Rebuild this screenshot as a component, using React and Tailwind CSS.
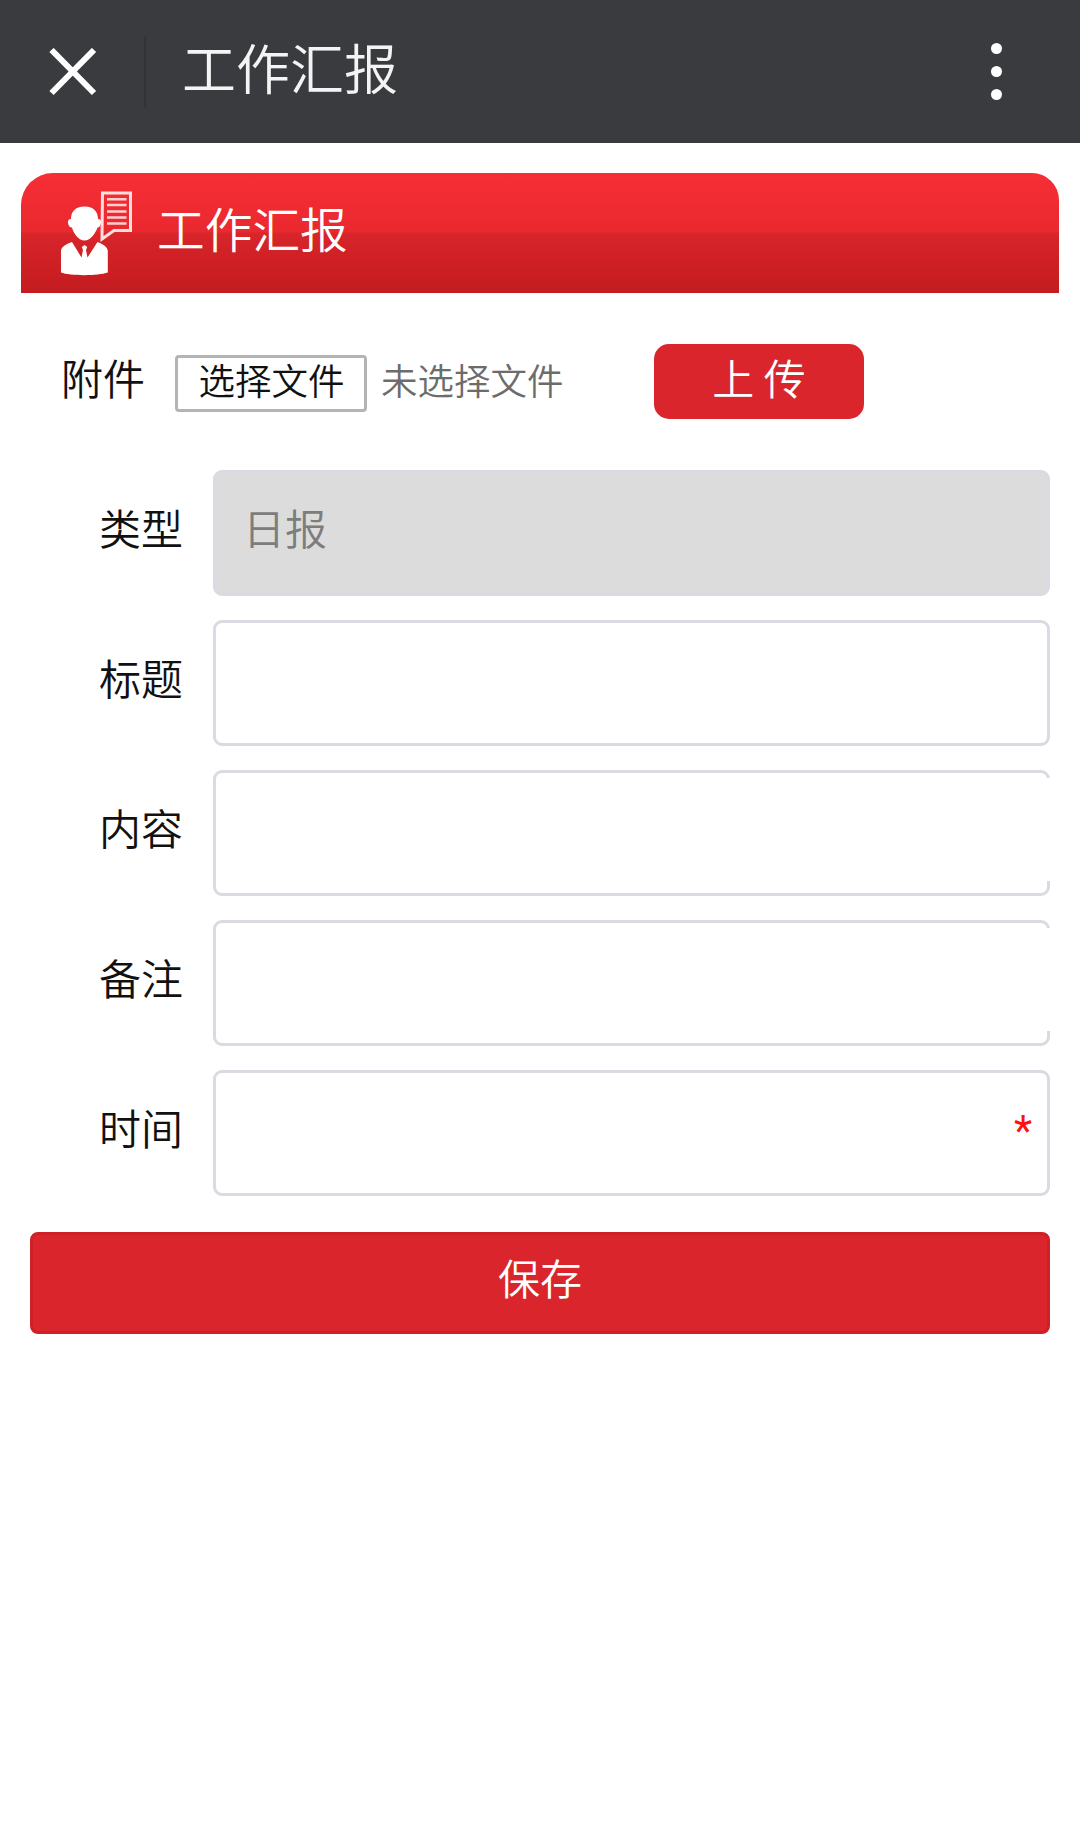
const fields = [
  { label: "类型", value: "日报", disabled: true },
  { label: "标题" },
  { label: "内容", open: true },
  { label: "备注", open: true },
  { label: "时间", required: true },
];

function ReporterIcon() {
  return (
    <svg className="h-[86px] w-[74px] shrink-0" viewBox="0 0 74 86" fill="none">
      <path
        d="M24.500 16.500C34 16.500 38 22 38 29C40.500 29 41.500 31 41 33C40.500 35.500 39.500 37.500 37.500 37.500C35.500 43 31 50.500 24.500 50.500C18 50.500 13.500 43 12 37.500C9.500 37.500 8.500 35.500 8 33C7.600 31 8.500 29 11 29C11 22 15 16.500 24.500 16.500Z"
        fill="#fff"
      />
      <path
        d="M1 82.500V61C1 57 7 53.500 12 52L21.500 67.500L23 60L21.800 57L24.500 55L27.200 57L26 60L27.500 67.500L37.500 52C42 53.500 47.800 57 47.800 61V82.500C38 86 10 86 1 82.500Z"
        fill="#fff"
      />
      <path d="M42.500 3H70.500V40.500H54L42 49Z" stroke="#ffdede" strokeWidth="3" />
      <path d="M47 9.200H66.500M47 15H66.500M47 21.500H66.500M47 27.500H66.500M47 33.500H66.500" stroke="#ffd0d0" strokeWidth="2.600" />
    </svg>
  );
}

function Field({ label, value, disabled, open, required }) {
  return (
    <div className="flex h-[126px] items-start">
      <label className="w-[213px] pl-[99px] pt-[27px] text-[42px] leading-[60px] text-[#111]">{label}</label>
      <div
        className={
          "relative h-[126px] w-[837px] rounded-[9px] border-[3px] border-[#dadae3] " +
          (disabled ? "bg-[#dcdcdc]" : "bg-white")
        }
      >
        {value && <div className="pl-[27px] pt-[24px] text-[42px] leading-[60px] text-[#7d7d7d]">{value}</div>}
        {open && <span className="absolute -right-[3px] top-[5px] h-[103px] w-[4px] bg-white" />}
        {required && (
          <span className="absolute right-[15px] top-[28px] font-[Roboto] text-[42px] font-normal leading-[60px] text-[#ff1010]">*</span>
        )}
      </div>
    </div>
  );
}

export default function App() {
  return (
    <main className="h-[1844px] w-[1080px] bg-white font-['Noto_Sans_CJK_SC',sans-serif] font-[350]">
      <header className="flex h-[143px] items-center bg-[#3a3b3f]">
        <svg className="ml-[49px] h-[48px] w-[48px]" viewBox="0 0 48 48">
          <path d="M2.500 2L45 45M45 2L2.500 45" stroke="#fff" strokeWidth="6" />
        </svg>
        <span className="ml-[47px] h-[72px] w-[2px] bg-[#333335]" />
        <h1 className="-mt-[9px] ml-[36px] text-[54px] leading-[80px] text-[#f4f4f4]">工作汇报</h1>
        <div className="-mt-[1px] ml-auto mr-[78px] flex flex-col gap-[12px]">
          <i className="size-[11px] rounded-full bg-white" />
          <i className="size-[11px] rounded-full bg-white" />
          <i className="size-[11px] rounded-full bg-white" />
        </div>
      </header>

      <section className="ml-[21px] mt-[30px] flex h-[120px] w-[1038px] items-start rounded-tl-[32px] rounded-tr-[27px] bg-[linear-gradient(#f72e35_0%,#e9292f_49%,#d8262b_50%,#cf2025_72%,#c31c20_100%)] pl-[39px] pt-[17px]">
        <ReporterIcon />
        <h2 className="ml-[23px] mt-[2px] text-[47.700px] leading-[72px] text-white">工作汇报</h2>
      </section>

      <section className="mt-[51px] flex h-[76px] items-start pl-[61px]">
        <span className="mt-[3px] text-[42px] leading-[60px] text-[#111]">附件</span>
        <button className="ml-[30px] mt-[11px] flex h-[57px] w-[192px] items-center justify-center rounded-[4px] border-[3px] border-[#b4b4b4] text-[36.500px] leading-[50px] text-[#111]">
          <span className="-mt-[8px] ml-[1px]">选择文件</span>
        </button>
        <span className="ml-[14px] mt-[11px] text-[36.500px] leading-[50px] text-[#6c6c6c]">未选择文件</span>
        <button className="ml-[90px] flex h-[75px] w-[210px] items-start justify-center rounded-[15px] bg-[#da252c] pl-[1px] pt-[3px] text-[42px] leading-[60px] text-white">
          上 传
        </button>
      </section>

      <section className="mt-[50px] flex flex-col gap-[24px]">
        {fields.map((f) => (
          <Field key={f.label} {...f} />
        ))}
      </section>

      <button className="ml-[30px] mt-[36px] flex h-[102px] w-[1020px] items-start justify-center rounded-[8px] border-[3px] border-[#cf2026] bg-[#da252c] pt-[12px] text-[42px] leading-[60px] text-white">
        保存
      </button>
    </main>
  );
}
